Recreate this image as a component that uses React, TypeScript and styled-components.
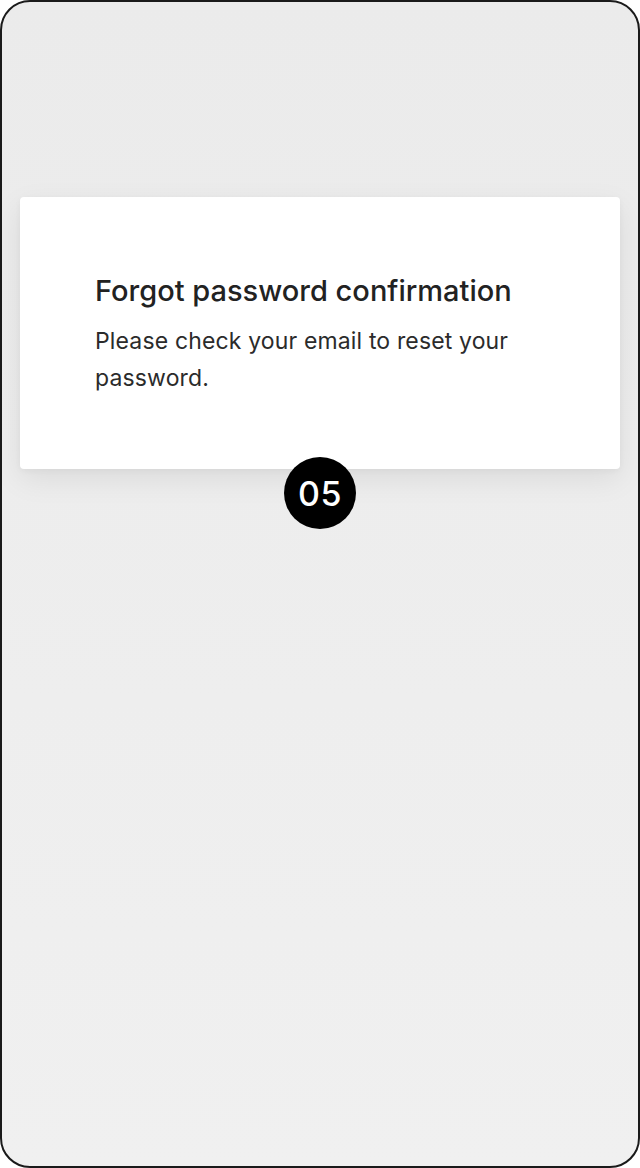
import styled, { createGlobalStyle } from 'styled-components';

const GlobalStyle = createGlobalStyle`
  html, body {
    margin: 0;
    padding: 0;
    background: #ffffff;
  }
  * {
    box-sizing: border-box;
  }
`;

export default function App() {
  return (
    <>
      <GlobalStyle />
      <Frame>
        <Card>
          <Title>Forgot password confirmation</Title>
          <Message>Please check your email to reset your password.</Message>
          <StepBadge>05</StepBadge>
        </Card>
      </Frame>
    </>
  );
}

const Frame = styled.div`
  width: 640px;
  height: 1168px;
  border: 2px solid #1a1a1a;
  border-radius: 30px;
  background: linear-gradient(180deg, #ebebeb 0%, #ededed 40%, #f0f0f0 100%);
  padding: 195px 18px 0;
  overflow: hidden;
  font-family: Inter, 'Noto Sans', sans-serif;
`;

const Card = styled.div`
  position: relative;
  background: #ffffff;
  border-radius: 4px;
  height: 272px;
  padding: 76px 75px 0;
  box-shadow: 0 10px 30px rgba(0, 0, 0, 0.08), 0 2px 6px rgba(0, 0, 0, 0.04);
`;

const Title = styled.h1`
  margin: 0 0 14px;
  font-size: 29px;
  line-height: 36px;
  font-weight: 500;
  color: #222222;
  letter-spacing: 0;
`;

const Message = styled.p`
  margin: 0;
  font-size: 23px;
  line-height: 37px;
  font-weight: 400;
  color: #2b2b2b;
  letter-spacing: 0.15px;
  max-width: 440px;
`;

const StepBadge = styled.div`
  position: absolute;
  left: 50%;
  bottom: -60px;
  transform: translateX(-50%);
  width: 72px;
  height: 72px;
  border-radius: 50%;
  background: #000000;
  color: #ffffff;
  display: flex;
  align-items: center;
  justify-content: center;
  font-size: 34px;
  font-weight: 500;
  letter-spacing: 0.5px;
`;
